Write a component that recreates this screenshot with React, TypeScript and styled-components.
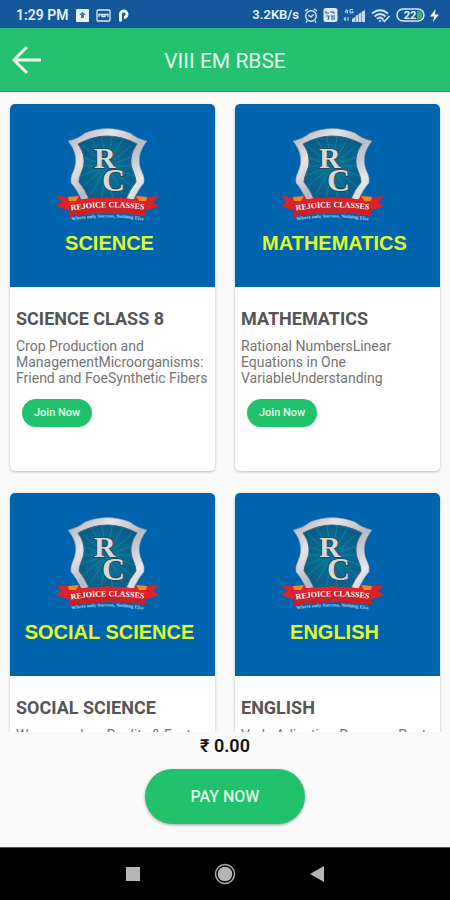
import React from 'react';
import styled, { createGlobalStyle } from 'styled-components';

const GlobalStyle = createGlobalStyle`
  *, *::before, *::after { box-sizing: border-box; }
  body { margin: 0; background: #fafafa; font-family: Roboto, "Noto Sans", sans-serif; }
  button { font-family: inherit; border: 0; cursor: pointer; }
  h1, h2, p { margin: 0; }
  svg { display: block; flex: none; }
`;

const Screen = styled.div`
  display: flex;
  flex-direction: column;
  height: 100vh;
`;

const StatusBar = styled.div`
  display: flex;
  flex: none;
  align-items: center;
  justify-content: space-between;
  height: 28px;
  padding: 2px 11px 0 16px;
  background: #14589b;
  color: #e6f0fa;
`;

const StatusGroup = styled.div<{ $gap: number }>`
  display: flex;
  align-items: center;
  gap: ${(p) => p.$gap}px;
`;

const StatusText = styled.span<{ $size: number }>`
  font-size: ${(p) => p.$size}px;
  font-weight: 600;
  line-height: 16px;
`;

const Header = styled.header`
  display: grid;
  flex: none;
  grid-template-columns: 54px 1fr 54px;
  align-items: center;
  height: 64px;
  background: #25c170;
  border-bottom: 1px solid #1fab62;
`;

const BackButton = styled.button`
  display: flex;
  align-items: center;
  height: 48px;
  padding: 0 0 0 11px;
  background: none;
  color: #e9fdf0;
`;

const HeaderTitle = styled.h1`
  padding-top: 2px;
  color: #e4fbed;
  font-size: 21px;
  font-weight: 400;
  line-height: 24px;
  text-align: center;
`;

const CourseList = styled.main`
  flex: 1;
  min-height: 0;
  overflow: hidden;
  padding: 12px 10px 0;
`;

const CourseGrid = styled.div`
  display: grid;
  grid-template-columns: 1fr 1fr;
  gap: 22px 20px;
`;

const Card = styled.article`
  display: flex;
  flex-direction: column;
  min-height: 367px;
  overflow: hidden;
  border-radius: 5px;
  background: #fff;
  box-shadow: 0 1px 3px rgba(0, 0, 0, 0.26);
`;

const Cover = styled.div`
  display: flex;
  flex-direction: column;
  align-items: center;
  height: 183px;
  padding: 18px 6px 0 0;
  background: #0063ad;
`;

const Subject = styled.span`
  color: #e0fb2c;
  font-family: "Liberation Sans", Arial, sans-serif;
  font-size: 20px;
  font-weight: 700;
  line-height: 24px;
`;

const Details = styled.div`
  display: flex;
  flex-direction: column;
  align-items: flex-start;
  padding: 20px 6px 0;
`;

const CourseTitle = styled.h2`
  color: #555;
  font-size: 18px;
  font-weight: 700;
  line-height: 24px;
`;

const Description = styled.p`
  display: -webkit-box;
  overflow: hidden;
  -webkit-box-orient: vertical;
  -webkit-line-clamp: 3;
  margin-top: 7px;
  color: #747474;
  font-size: 14px;
  line-height: 16px;
`;

const JoinButton = styled.button`
  height: 28px;
  margin: 13px 0 0 6px;
  padding: 0 12px;
  border-radius: 14px;
  background: #22c16c;
  color: #e2fbea;
  font-size: 11px;
  font-weight: 500;
  line-height: 16px;
`;

const Footer = styled.footer`
  display: flex;
  flex: none;
  flex-direction: column;
  align-items: center;
  gap: 11px;
  padding: 2px 0 23px;
  background: #fafafa;
`;

const Total = styled.p`
  color: #111;
  font-size: 18px;
  font-weight: 600;
  line-height: 24px;
`;

const PayButton = styled.button`
  height: 55px;
  padding: 0 46px;
  border-radius: 28px;
  background: #22c16c;
  box-shadow: 0 1px 3px rgba(0, 0, 0, 0.35);
  color: #d9f8e5;
  font-size: 16px;
  font-weight: 500;
  line-height: 24px;
`;

const NavBar = styled.nav`
  display: flex;
  flex: none;
  align-items: center;
  justify-content: center;
  gap: 66px;
  height: 53px;
  border-top: 1px solid #555;
  background: #000;
`;

const NavButton = styled.button`
  display: flex;
  align-items: center;
  justify-content: center;
  width: 26px;
  height: 26px;
  padding: 0;
  background: none;
`;

function CrestLogo({ id }: { id: string }) {
  const rays = Array.from({ length: 18 }, (_, i) => {
    const a = (i * Math.PI) / 9;
    return `M${62 + 9 * Math.cos(a)} ${44 + 9 * Math.sin(a)}L${62 + 32 * Math.cos(a)} ${44 + 32 * Math.sin(a)}`;
  }).join('');
  const field =
    'M33 22Q48 14 62 14Q77 14 92 22C86 30 84 40 88 49Q91 56 91 60Q85 67 80 79H45Q40 67 34 60Q34 56 37 49C41 40 39 30 33 22Z';
  return (
    <svg width="111" height="109" viewBox="9 0 111 109" role="img" aria-label="Rejoice Classes">
      <defs>
        <linearGradient id={`${id}-silver`} x1="0" y1="0" x2="1" y2="1">
          <stop offset="0" stopColor="#a9abb3" />
          <stop offset="0.3" stopColor="#e3e4e8" />
          <stop offset="0.55" stopColor="#b7bac4" />
          <stop offset="0.8" stopColor="#e6e8ee" />
          <stop offset="1" stopColor="#c4c8d2" />
        </linearGradient>
        <radialGradient id={`${id}-field`} cx="0.5" cy="0.5" r="0.6">
          <stop offset="0" stopColor="#0a7599" />
          <stop offset="1" stopColor="#075b86" />
        </radialGradient>
        <clipPath id={`${id}-clip`}>
          <path d={field} />
        </clipPath>
        <path id={`${id}-name`} d="M24 89Q62 82 101 88" />
        <path id={`${id}-motto`} d="M24 99Q62 92 101 99" />
      </defs>
      <path
        d="M23 19Q33 17 40 11Q62 2 85 11Q92 17 102 19C94 29 92 39 97 50Q100 56 99 61Q94 66 88 79H37Q31 66 26 61Q25 56 28 50C33 39 31 29 23 19Z"
        fill={`url(#${id}-silver)`}
        stroke="#8791a3"
        strokeWidth="0.5"
      />
      <path d={field} fill={`url(#${id}-field)`} stroke="#42607c" strokeWidth="1" />
      <path d={rays} stroke="#1d86a6" strokeWidth="0.7" clipPath={`url(#${id}-clip)`} />
      <g
        fontFamily="Liberation Serif, serif"
        fontWeight="700"
        fill="#d8d8d8"
        stroke="#2b3f4b"
        strokeWidth="1.6"
        paintOrder="stroke"
      >
        <text x="49" y="46" fontSize="30">R</text>
        <text x="57" y="69" fontSize="32">C</text>
      </g>
      <path d="M11 74Q23 76 35 74V88H24Q18 87 11 84L17 80Z" fill="#dc2127" />
      <path d="M114 74Q102 76 90 74V88H101Q107 87 114 84L108 80Z" fill="#dc2127" />
      <path d="M24 79Q62 72 101 79V94Q62 88 24 95Z" fill="#c5222c" />
      <path d="M24 79Q62 72 101 79L100 84Q62 78 25 84Z" fill="#e32328" />
      <path d="M23 75L34 74L31 79L24 79Z" fill="#eb8b21" />
      <path d="M102 75L91 74L94 79L101 79Z" fill="#eb8b21" />
      <text fontFamily="Liberation Serif, serif" fontWeight="700" fontSize="8" fill="#fff">
        <textPath href={`#${id}-name`} startOffset="50%" textAnchor="middle">REJOICE CLASSES</textPath>
      </text>
      <text fontFamily="Liberation Serif, serif" fontWeight="700" fontSize="5" fill="#a9d2f4">
        <textPath href={`#${id}-motto`} startOffset="50%" textAnchor="middle">Where only Success, Nothing Else</textPath>
      </text>
    </svg>
  );
}

const courses = [
  {
    id: 'science',
    subject: 'SCIENCE',
    title: 'SCIENCE CLASS 8',
    text: 'Crop Production and ManagementMicroorganisms: Friend and FoeSynthetic Fibers',
  },
  {
    id: 'mathematics',
    subject: 'MATHEMATICS',
    title: 'MATHEMATICS',
    text: 'Rational NumbersLinear Equations in One VariableUnderstanding',
  },
  {
    id: 'social',
    subject: 'SOCIAL SCIENCE',
    title: 'SOCIAL SCIENCE',
    text: 'Women, when Reality & Fact',
  },
  {
    id: 'english',
    subject: 'ENGLISH',
    title: 'ENGLISH',
    text: 'Verb, Adjective, Pronoun, Past',
  },
];

export default function App() {
  return (
    <>
      <GlobalStyle />
      <Screen>
        <StatusBar>
          <StatusGroup $gap={7}>
            <StatusText $size={14}>1:29 PM</StatusText>
            <svg width="13" height="13" viewBox="0 0 13 13">
              <rect width="13" height="13" rx="1" fill="#e6f0fa" />
              <path d="M6.500 3L10 6H8V9H5V6H3Z" fill="#47749f" />
            </svg>
            <svg width="15" height="13" viewBox="0 0 15 13" fill="none" stroke="#dbe8f5">
              <rect x="1" y="1" width="13" height="11" rx="1" strokeWidth="1.300" />
              <path d="M3 8V5.500H12V8M6 5.500V7.500H9V5.500" strokeWidth="1.300" />
            </svg>
            <svg width="11" height="13" viewBox="0 0 11 13">
              <path d="M2.500 12.500V6A3.300 3.300 0 1 1 6 8.500" fill="none" stroke="#fff" strokeWidth="2.900" />
            </svg>
          </StatusGroup>
          <StatusGroup $gap={5}>
            <StatusText $size={13}>3.2KB/s</StatusText>
            <svg width="14" height="15" viewBox="0 0 14 15" fill="none" stroke="#dbe8f5" strokeWidth="1.400">
              <circle cx="7" cy="8" r="5.300" />
              <path d="M4.500 7L7 9L9.500 6.500M1 3L4 1M13 3L10 1M3 13L2 14.500M11 13L12 14.500" />
            </svg>
            <svg width="15" height="14" viewBox="0 0 15 14">
              <rect x="0.500" width="14" height="14" rx="2.500" fill="#dbe8f5" />
              <path d="M3 3V5H6M8 3V5M10 3V5H12M3 8H6L5 12M8 8H12M9 8V12M11 9V12" fill="none" stroke="#2c649d" strokeWidth="1.100" />
            </svg>
            <svg width="23" height="15" viewBox="0 0 23 15" fill="#c7d9ea">
              <path d="M9 14V11L12 9V14ZM12.500 14V8L15 6.500V14ZM15.500 14V6L18 4.500V14ZM18.500 14V4L22 2V14Z" />
              <path d="M4 1L2 4H5M4.500 2V5.500M10 1.500H7V5H10V3.500H8.500M2 9V13M0.800 11H3.200M5 9V13" fill="none" stroke="#c7d9ea" />
            </svg>
            <svg width="20" height="15" viewBox="0 0 20 15" fill="none" stroke="#dbe8f5" strokeWidth="1.900">
              <path d="M1 5.500Q9 -1 17 5.500M3.500 8.500Q9 3.500 14.500 8.500M6 11Q9 8 12 11" />
              <circle cx="9" cy="13" r="1" fill="#dbe8f5" stroke="none" />
              <path d="M11 11L13.500 13.500L18.500 8" strokeWidth="1.500" />
            </svg>
            <svg width="29" height="14" viewBox="0 0 29 14">
              <rect x="1" y="1" width="27" height="12" rx="6" fill="none" stroke="#dbe8f5" strokeWidth="1.500" />
              <path d="M21 2.500H22A4.500 4.500 0 0 1 22 11.500H21Z" fill="#43b05c" />
              <text x="14" y="11" textAnchor="middle" fontFamily="Roboto" fontWeight="700" fontSize="11" fill="#edf5fb">22</text>
            </svg>
            <svg width="9" height="13" viewBox="0 0 9 13">
              <path d="M5.500 0L0 7.500H4L3 13L9 5.500H5Z" fill="#edf5fb" />
            </svg>
          </StatusGroup>
        </StatusBar>
        <Header>
          <BackButton aria-label="Back">
            <svg width="31" height="30" viewBox="0 0 31 30" fill="none" stroke="currentColor" strokeWidth="3">
              <path d="M30 15H4M16 2L3 15L16 28" />
            </svg>
          </BackButton>
          <HeaderTitle>VIII EM RBSE</HeaderTitle>
        </Header>
        <CourseList>
          <CourseGrid>
            {courses.map((course) => (
              <Card key={course.id}>
                <Cover>
                  <CrestLogo id={course.id} />
                  <Subject>{course.subject}</Subject>
                </Cover>
                <Details>
                  <CourseTitle>{course.title}</CourseTitle>
                  <Description>{course.text}</Description>
                  <JoinButton>Join Now</JoinButton>
                </Details>
              </Card>
            ))}
          </CourseGrid>
        </CourseList>
        <Footer>
          <Total>₹ 0.00</Total>
          <PayButton>PAY NOW</PayButton>
        </Footer>
        <NavBar aria-label="System navigation">
          <NavButton aria-label="Recent apps">
            <svg width="14" height="14" viewBox="0 0 14 14"><rect width="14" height="14" fill="#b5b5b5" /></svg>
          </NavButton>
          <NavButton aria-label="Home">
            <svg width="22" height="22" viewBox="0 0 22 22">
              <circle cx="11" cy="11" r="9.500" fill="none" stroke="#aaa" strokeWidth="1.500" />
              <circle cx="11" cy="11" r="7.300" fill="#b5b5b5" />
            </svg>
          </NavButton>
          <NavButton aria-label="Go back">
            <svg width="14" height="16" viewBox="0 0 14 16"><path d="M14 0V16L0 8Z" fill="#b5b5b5" /></svg>
          </NavButton>
        </NavBar>
      </Screen>
    </>
  );
}
